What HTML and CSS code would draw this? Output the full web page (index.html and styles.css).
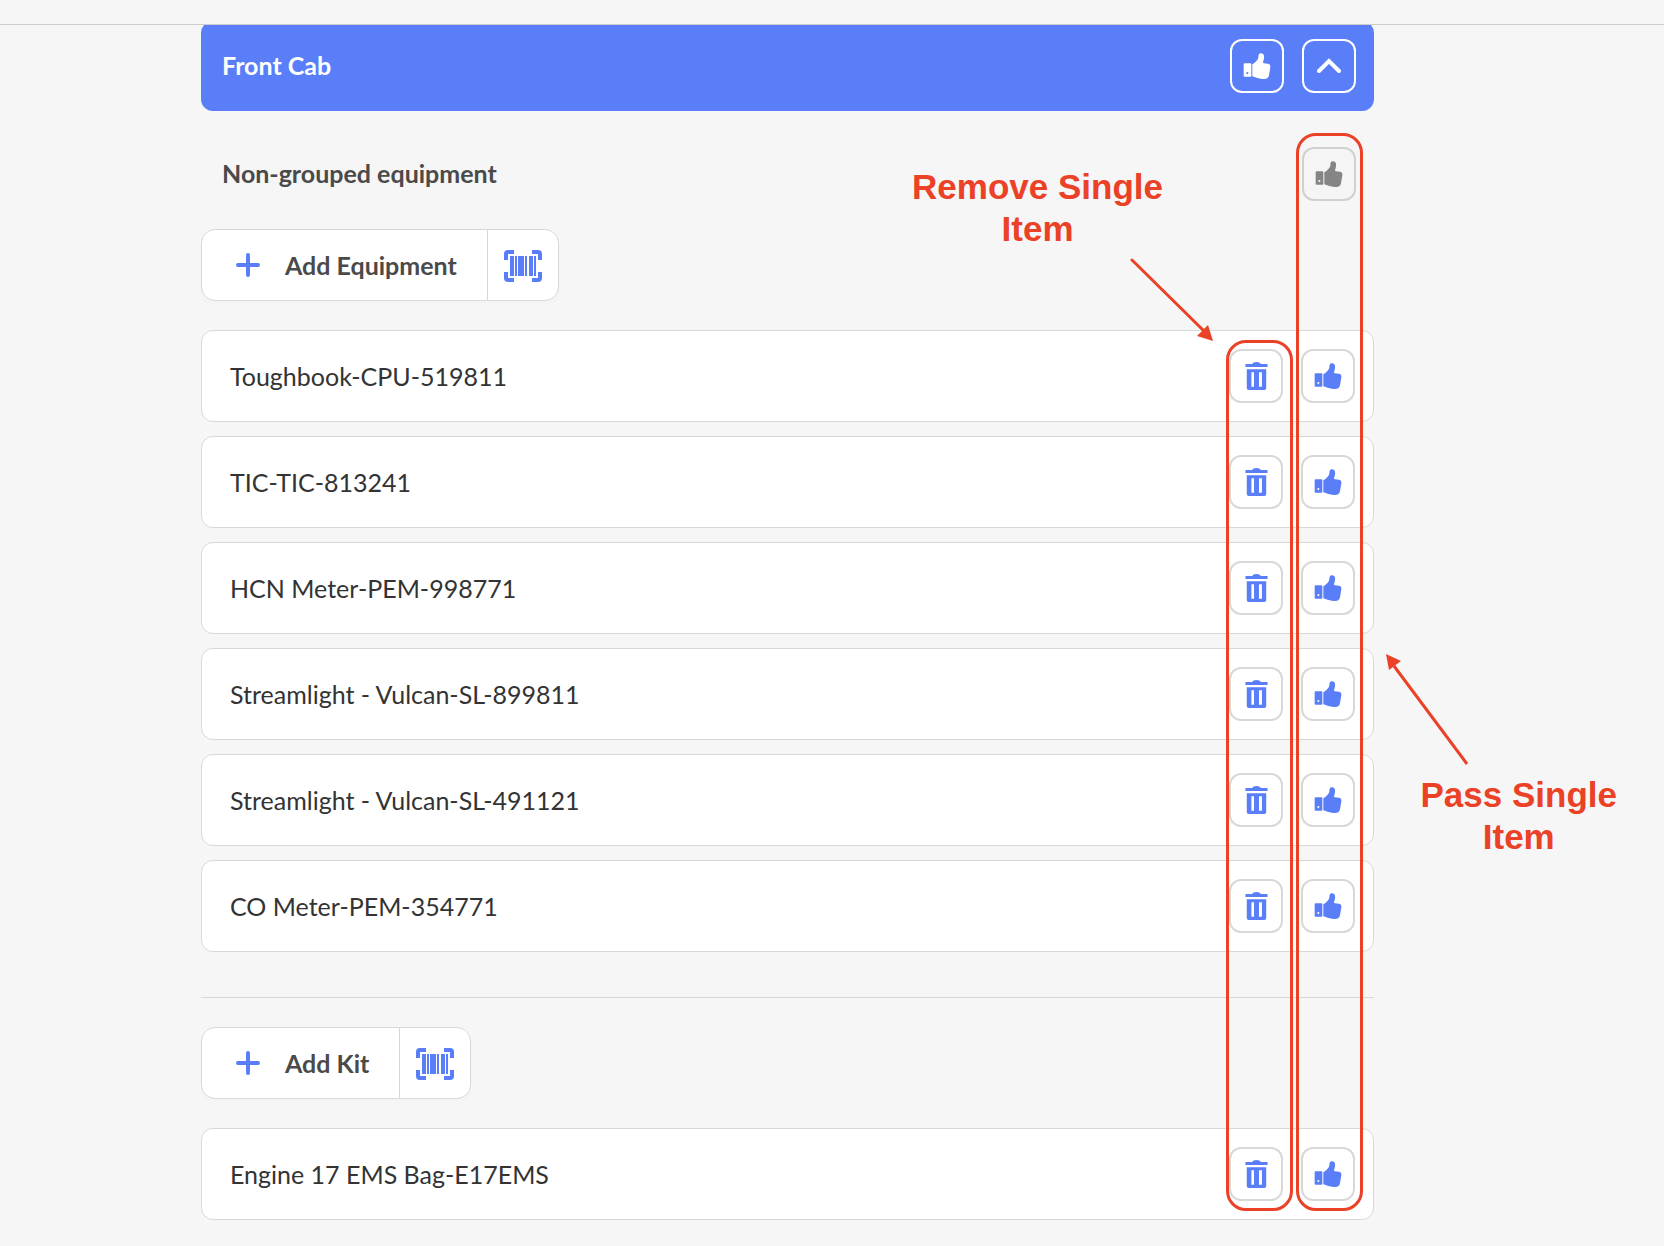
FILE: index.html
```html
<!DOCTYPE html>
<html lang="en">
<head>
<meta charset="utf-8">
<title>Front Cab</title>
<link rel="stylesheet" href="styles.css">
</head>

<body>

<!-- shared icons -->
<svg class="sprite" aria-hidden="true">
  <symbol id="thumb" viewBox="0 0 82 78">
    <path fill-rule="evenodd" d="M4 31H21Q24 31 24 34V68Q24 71 21 71H4Q1 71 1 68V34Q1 31 4 31ZM12 57a3 3 0 1 0 .1 0Z"/>
    <path d="M27 34C34 30 41 23 44 17C46 12 45 7 47 3C50 -1 58 0 61 5C64 12 61 20 59 28C59 30 60 31 62 31L74 32C79 33 82 37 81 43L77 67C76 72 73 76 68 77C55 79 43 76 34 72L27 70Z"/>
  </symbol>
  <symbol id="trash" viewBox="0 0 69 85">
    <path d="M1 6H21Q24 0 34 0Q45 0 48 6H68V15H1Z"/>
    <path fill-rule="evenodd" d="M5 22H64V79Q64 85 58 85H11Q5 85 5 79ZM19 31V75H27V31ZM42 31V75H51V31Z"/>
  </symbol>
  <symbol id="plus" viewBox="0 0 24 24">
    <path d="M12 2V22M2 12H22" fill="none" stroke="currentColor" stroke-width="4" stroke-linecap="round"/>
  </symbol>
  <symbol id="up" viewBox="0 0 24 16">
    <path d="M2 13L12 3L22 13" fill="none" stroke="currentColor" stroke-width="4" stroke-linecap="round"/>
  </symbol>
  <symbol id="scan" viewBox="0 0 38 32">
    <path d="M10 2H4Q2 2 2 4V10M28 2H34Q36 2 36 4V10M2 22V28Q2 30 4 30H10M36 22V28Q36 30 34 30H28" fill="none" stroke="currentColor" stroke-width="4"/>
    <path d="M6 6H10V26H6ZM11 6H13V26H11ZM14 6H20V26H14ZM21 6H23V26H21ZM25 6H29V26H25ZM30 6H32V26H30Z"/>
  </symbol>
</svg>

<div class="topbar"></div>

<main>
  <div class="content">

    <header class="section-head">
      <h2>Front Cab</h2>
      <div class="actions">
        <button type="button" class="btn light" aria-label="Pass all"><svg class="i-thumb"><use href="#thumb"/></svg></button>
        <button type="button" class="btn light" aria-label="Collapse"><svg class="i-up"><use href="#up"/></svg></button>
      </div>
    </header>

    <div class="group-head">
      <h3>Non-grouped equipment</h3>
      <button type="button" class="btn muted" aria-label="Pass group"><svg class="i-thumb"><use href="#thumb"/></svg></button>
    </div>

    <div class="add">
      <button type="button" class="add-item"><svg class="i-plus"><use href="#plus"/></svg>Add Equipment</button>
      <button type="button" class="add-scan" aria-label="Scan equipment"><svg class="i-scan"><use href="#scan"/></svg></button>
    </div>

    <ul class="items">
      <li>
        <span>Toughbook-CPU-519811</span>
        <div class="actions">
          <button type="button" class="btn" aria-label="Remove"><svg class="i-trash"><use href="#trash"/></svg></button>
          <button type="button" class="btn" aria-label="Pass"><svg class="i-thumb"><use href="#thumb"/></svg></button>
        </div>
      </li>
      <li>
        <span>TIC-TIC-813241</span>
        <div class="actions">
          <button type="button" class="btn" aria-label="Remove"><svg class="i-trash"><use href="#trash"/></svg></button>
          <button type="button" class="btn" aria-label="Pass"><svg class="i-thumb"><use href="#thumb"/></svg></button>
        </div>
      </li>
      <li>
        <span>HCN Meter-PEM-998771</span>
        <div class="actions">
          <button type="button" class="btn" aria-label="Remove"><svg class="i-trash"><use href="#trash"/></svg></button>
          <button type="button" class="btn" aria-label="Pass"><svg class="i-thumb"><use href="#thumb"/></svg></button>
        </div>
      </li>
      <li>
        <span>Streamlight - Vulcan-SL-899811</span>
        <div class="actions">
          <button type="button" class="btn" aria-label="Remove"><svg class="i-trash"><use href="#trash"/></svg></button>
          <button type="button" class="btn" aria-label="Pass"><svg class="i-thumb"><use href="#thumb"/></svg></button>
        </div>
      </li>
      <li>
        <span>Streamlight - Vulcan-SL-491121</span>
        <div class="actions">
          <button type="button" class="btn" aria-label="Remove"><svg class="i-trash"><use href="#trash"/></svg></button>
          <button type="button" class="btn" aria-label="Pass"><svg class="i-thumb"><use href="#thumb"/></svg></button>
        </div>
      </li>
      <li>
        <span>CO Meter-PEM-354771</span>
        <div class="actions">
          <button type="button" class="btn" aria-label="Remove"><svg class="i-trash"><use href="#trash"/></svg></button>
          <button type="button" class="btn" aria-label="Pass"><svg class="i-thumb"><use href="#thumb"/></svg></button>
        </div>
      </li>
    </ul>

    <hr>

    <div class="add">
      <button type="button" class="add-item"><svg class="i-plus"><use href="#plus"/></svg>Add Kit</button>
      <button type="button" class="add-scan" aria-label="Scan kit"><svg class="i-scan"><use href="#scan"/></svg></button>
    </div>

    <ul class="items">
      <li>
        <span>Engine 17 EMS Bag-E17EMS</span>
        <div class="actions">
          <button type="button" class="btn" aria-label="Remove"><svg class="i-trash"><use href="#trash"/></svg></button>
          <button type="button" class="btn" aria-label="Pass"><svg class="i-thumb"><use href="#thumb"/></svg></button>
        </div>
      </li>
    </ul>

    <!-- callouts over the two button columns -->
    <div class="outline outline-remove"></div>
    <div class="outline outline-pass"></div>
    <p class="note note-remove">Remove Single<br>Item</p>
    <p class="note note-pass">Pass Single<br>Item</p>
    <svg class="arrow arrow-remove" viewBox="0 0 84 84">
      <path d="M2 2L74 73" stroke="currentColor" stroke-width="3" stroke-linecap="round"/>
      <path d="M83 83L67 78L78 67Z"/>
    </svg>
    <svg class="arrow arrow-pass" viewBox="0 0 84 112">
      <path d="M82 110L9 12" stroke="currentColor" stroke-width="3"/>
      <path d="M1 0L16 7L4 16Z"/>
    </svg>

  </div>
</main>

</body>
</html>
```
FILE: styles.css
```css
* {
  box-sizing: border-box;
}

body {
  margin: 0;
  background-color: #f6f6f6;
  color: #333;
  font-family: Lato, sans-serif;
  font-size: 25px;
  line-height: 30px;
}

h2, h3, p, ul {
  margin: 0;
  padding: 0;
}

h2, h3 {
  padding-bottom: 2px;
  font-size: 25px;
  font-weight: bold;
}

button {
  padding: 0;
  font: inherit;
  cursor: pointer;
}

svg {
  fill: currentColor;
}

.sprite {
  display: none;
}

.topbar {
  height: 25px;
  border-bottom: 1px solid #ccc;
}

main {
  padding: 0 290px 26px 201px;
  overflow: hidden;
}

.content {
  position: relative;
  margin-top: -4px;
}

/* blue bar, its top edge is scrolled under the top bar */
.section-head {
  display: flex;
  align-items: center;
  justify-content: space-between;
  height: 90px;
  padding: 0 18px 0 21px;
  border-radius: 12px;
  background-color: #597ef8;
  color: #fff;
}

.actions {
  display: flex;
  gap: 18px;
}

.btn {
  display: flex;
  align-items: center;
  justify-content: center;
  width: 54px;
  height: 54px;
  border: 2px solid #d8d8d8;
  border-radius: 12px;
  background-color: #fff;
  color: #597ef8;
}

.btn.light {
  border-color: #fff;
  background-color: transparent;
  color: #fff;
}

.btn.muted {
  border-color: #d0d0d0;
  background-color: #f5f5f5;
  color: #858585;
}

.i-thumb {
  width: 28px;
  height: 26px;
}

.i-trash {
  width: 23px;
  height: 28px;
}

.i-up {
  width: 24px;
  height: 16px;
}

.i-plus {
  width: 24px;
  height: 24px;
}

.i-scan {
  width: 38px;
  height: 32px;
}

.group-head {
  display: flex;
  align-items: center;
  justify-content: space-between;
  padding: 36px 18px 28px 21px;
  color: #4a4a4a;
}

.add {
  display: flex;
  width: fit-content;
  height: 72px;
  margin-bottom: 29px;
  border: 1px solid #d8d8d8;
  border-radius: 14px;
  background-color: #fff;
  box-shadow: 0 4px 8px rgba(0, 0, 0, 0.01);
}

.add button {
  display: flex;
  align-items: center;
  border: none;
  background: none;
  color: #597ef8;
}

.add .add-item {
  gap: 25px;
  padding: 0 30px 0 34px;
  color: #4a4a4a;
  font-weight: bold;
}

.add-item svg {
  color: #597ef8;
}

.add .add-scan {
  justify-content: center;
  width: 71px;
  padding-top: 2px;
  border-left: 1px solid #d8d8d8;
}

.items {
  display: flex;
  flex-direction: column;
  gap: 14px;
  list-style: none;
}

.items li {
  display: flex;
  align-items: center;
  justify-content: space-between;
  height: 92px;
  padding: 0 18px 0 28px;
  border: 1px solid #d8d8d8;
  border-radius: 12px;
  background-color: #fff;
}

hr {
  margin: 45px 0 29px;
  border: none;
  border-top: 1px solid #d8d8d8;
}

/* callouts */
.outline,
.note,
.arrow {
  position: absolute;
  color: #eb4126;
}

.outline {
  bottom: 9px;
  width: 67px;
  border: 3px solid #eb4126;
  border-radius: 20px;
  pointer-events: none;
}

.outline-remove {
  top: 319px;
  right: 81px;
}

.outline-pass {
  top: 112px;
  right: 11px;
}

.note {
  font-family: "Liberation Sans", Arial, sans-serif;
  font-size: 35px;
  font-weight: bold;
  line-height: 42px;
  text-align: center;
  white-space: nowrap;
}

.note-remove {
  top: 145px;
  right: 211px;
}

.note-pass {
  top: 753px;
  right: -243px;
}

.arrow-remove {
  top: 237px;
  right: 160px;
  width: 84px;
  height: 84px;
}

.arrow-pass {
  top: 633px;
  right: -95px;
  width: 84px;
  height: 112px;
}
```
